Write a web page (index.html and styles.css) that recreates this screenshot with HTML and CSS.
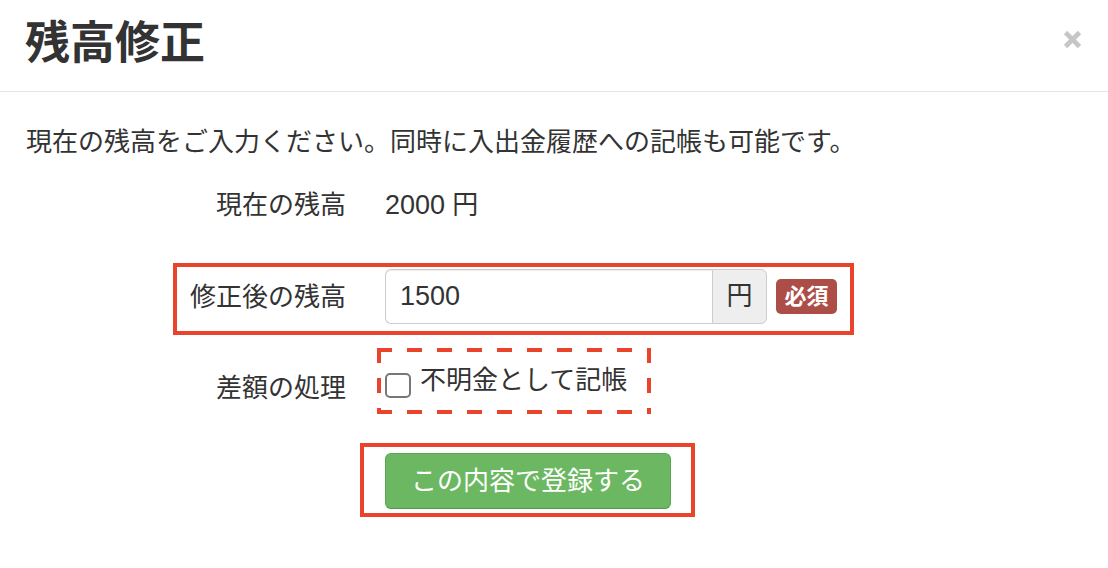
FILE: index.html
```html
<!DOCTYPE html>
<html lang="ja">
<head>
<meta charset="utf-8">
<title>残高修正</title>
<link rel="stylesheet" href="styles.css">
</head>
<body>
<div class="modal">
  <div class="modal-header">
    <h4 class="modal-title">残高修正</h4>
    <button class="close" type="button" aria-label="閉じる">
      <svg width="19" height="19" viewBox="0 0 19 19"><path d="M2.5 2.5 L16.5 16.5 M16.5 2.5 L2.5 16.5" stroke="#c6c6c6" stroke-width="4.6" stroke-linecap="butt"/></svg>
    </button>
  </div>
  <div class="modal-body">
    <p class="intro">現在の残高をご入力ください。同時に入出金履歴への記帳も可能です。</p>
    <div class="row row-static">
      <div class="row-label">現在の残高</div>
      <div class="row-value"><span class="num">2000</span> 円</div>
    </div>
    <div class="row-hl">
      <div class="row-label hl-label">修正後の残高</div>
      <div class="input-group">
        <div class="form-control"><span class="num">1500</span></div>
        <div class="addon">円</div>
      </div>
      <span class="badge">必須</span>
    </div>
    <div class="row row-check">
      <div class="row-label check-label">差額の処理</div>
      <div class="check-box">
        <span class="checkbox"></span>
        <span class="check-text">不明金として記帳</span>
      </div>
    </div>
    <div class="submit-box">
      <button class="btn-success" type="button">この内容で登録する</button>
    </div>
  </div>
</div>
</body>
</html>
```

FILE: styles.css
```css
* { box-sizing: border-box; }
html, body { margin: 0; padding: 0; background: #fff; }
body {
  font-family: "Liberation Sans", "Noto Sans CJK JP", sans-serif;
  font-size: 26px;
  color: #333;
  width: 1108px;
  height: 568px;
  overflow: hidden;
}
.modal-header {
  display: flex;
  justify-content: space-between;
  align-items: flex-start;
  height: 92px;
  border-bottom: 1px solid #e5e5e5;
  padding: 0 26px 0 25px;
}
.modal-title {
  margin: 0;
  font-size: 45px;
  font-weight: bold;
  line-height: 88px;
  color: #333;
}
.close {
  margin-top: 30px;
  padding: 0;
  border: 0;
  background: none;
  width: 19px;
  height: 19px;
  display: block;
}
.close svg { display: block; }
.modal-body { padding: 32px 26px 0 26px; }
.intro { margin: 0; line-height: 36px; }
.row {
  display: flex;
  gap: 39px;
}
.row-label {
  width: 320px;
  text-align: right;
  line-height: 36px;
  flex: none;
}
.num { font-size: 27px; }
.row-static { margin-top: 27px; line-height: 36px; }
.row-hl {
  margin-top: 40px;
  margin-left: 147px;
  width: 681px;
  display: flex;
  align-items: center;
  border: 4px solid #e9432b;
  padding: 2px 13px 7px 0;
}
.hl-label { width: 169px; margin-right: 39px; }
.input-group { display: flex; width: 382px; height: 55px; }
.form-control {
  flex: 1;
  border: 1px solid #ccc;
  border-right: 0;
  border-radius: 6px 0 0 6px;
  padding-left: 14px;
  line-height: 53px;
  box-shadow: inset 0 1px 1px rgba(0,0,0,.075);
}
.addon {
  width: 55px;
  background: #eee;
  border: 1px solid #ccc;
  border-radius: 0 6px 6px 0;
  text-align: center;
  line-height: 53px;
}
.badge {
  margin-left: 9px;
  width: 61px;
  height: 35px;
  background: #ad4d47;
  color: #fff;
  font-weight: bold;
  font-size: 22px;
  line-height: 35px;
  text-align: center;
  border-radius: 5px;
}
.row-check { margin-top: 13px; align-items: flex-start; }
.check-label { padding-top: 22px; }
.check-box {
  margin-left: -8px;
  width: 274px;
  height: 66px;
  display: flex;
  align-items: flex-start;
  padding: 14px 0 0 8px;
  background:
    linear-gradient(90deg, #e9432b 15px, transparent 15px) left top / 30px 4px repeat-x,
    linear-gradient(90deg, #e9432b 15px, transparent 15px) left bottom / 30px 4px repeat-x,
    linear-gradient(180deg, #e9432b 15px, transparent 15px) left top / 4px 30px repeat-y,
    linear-gradient(180deg, #e9432b 15px, transparent 15px) right top / 4px 30px repeat-y;
}
.checkbox {
  width: 26px;
  height: 25px;
  margin-top: 11px;
  border: 2px solid #777;
  border-radius: 5px;
  flex: none;
  background: #fff;
}
.check-text { margin-left: 9px; line-height: 36px; }
.submit-box {
  margin-top: 29px;
  margin-left: 334px;
  width: 335px;
  height: 74px;
  border: 4px solid #e9432b;
  padding: 6px 0 0 21px;
}
.btn-success {
  display: block;
  width: 286px;
  height: 56px;
  background: #6cb862;
  border: 1px solid #5aa852;
  border-bottom-color: #4e9a47;
  border-radius: 6px;
  color: #fff;
  font-family: "Liberation Sans", "Noto Sans CJK JP", sans-serif;
  font-size: 26px;
  line-height: 52px;
  padding: 0;
  text-align: center;
}
```
